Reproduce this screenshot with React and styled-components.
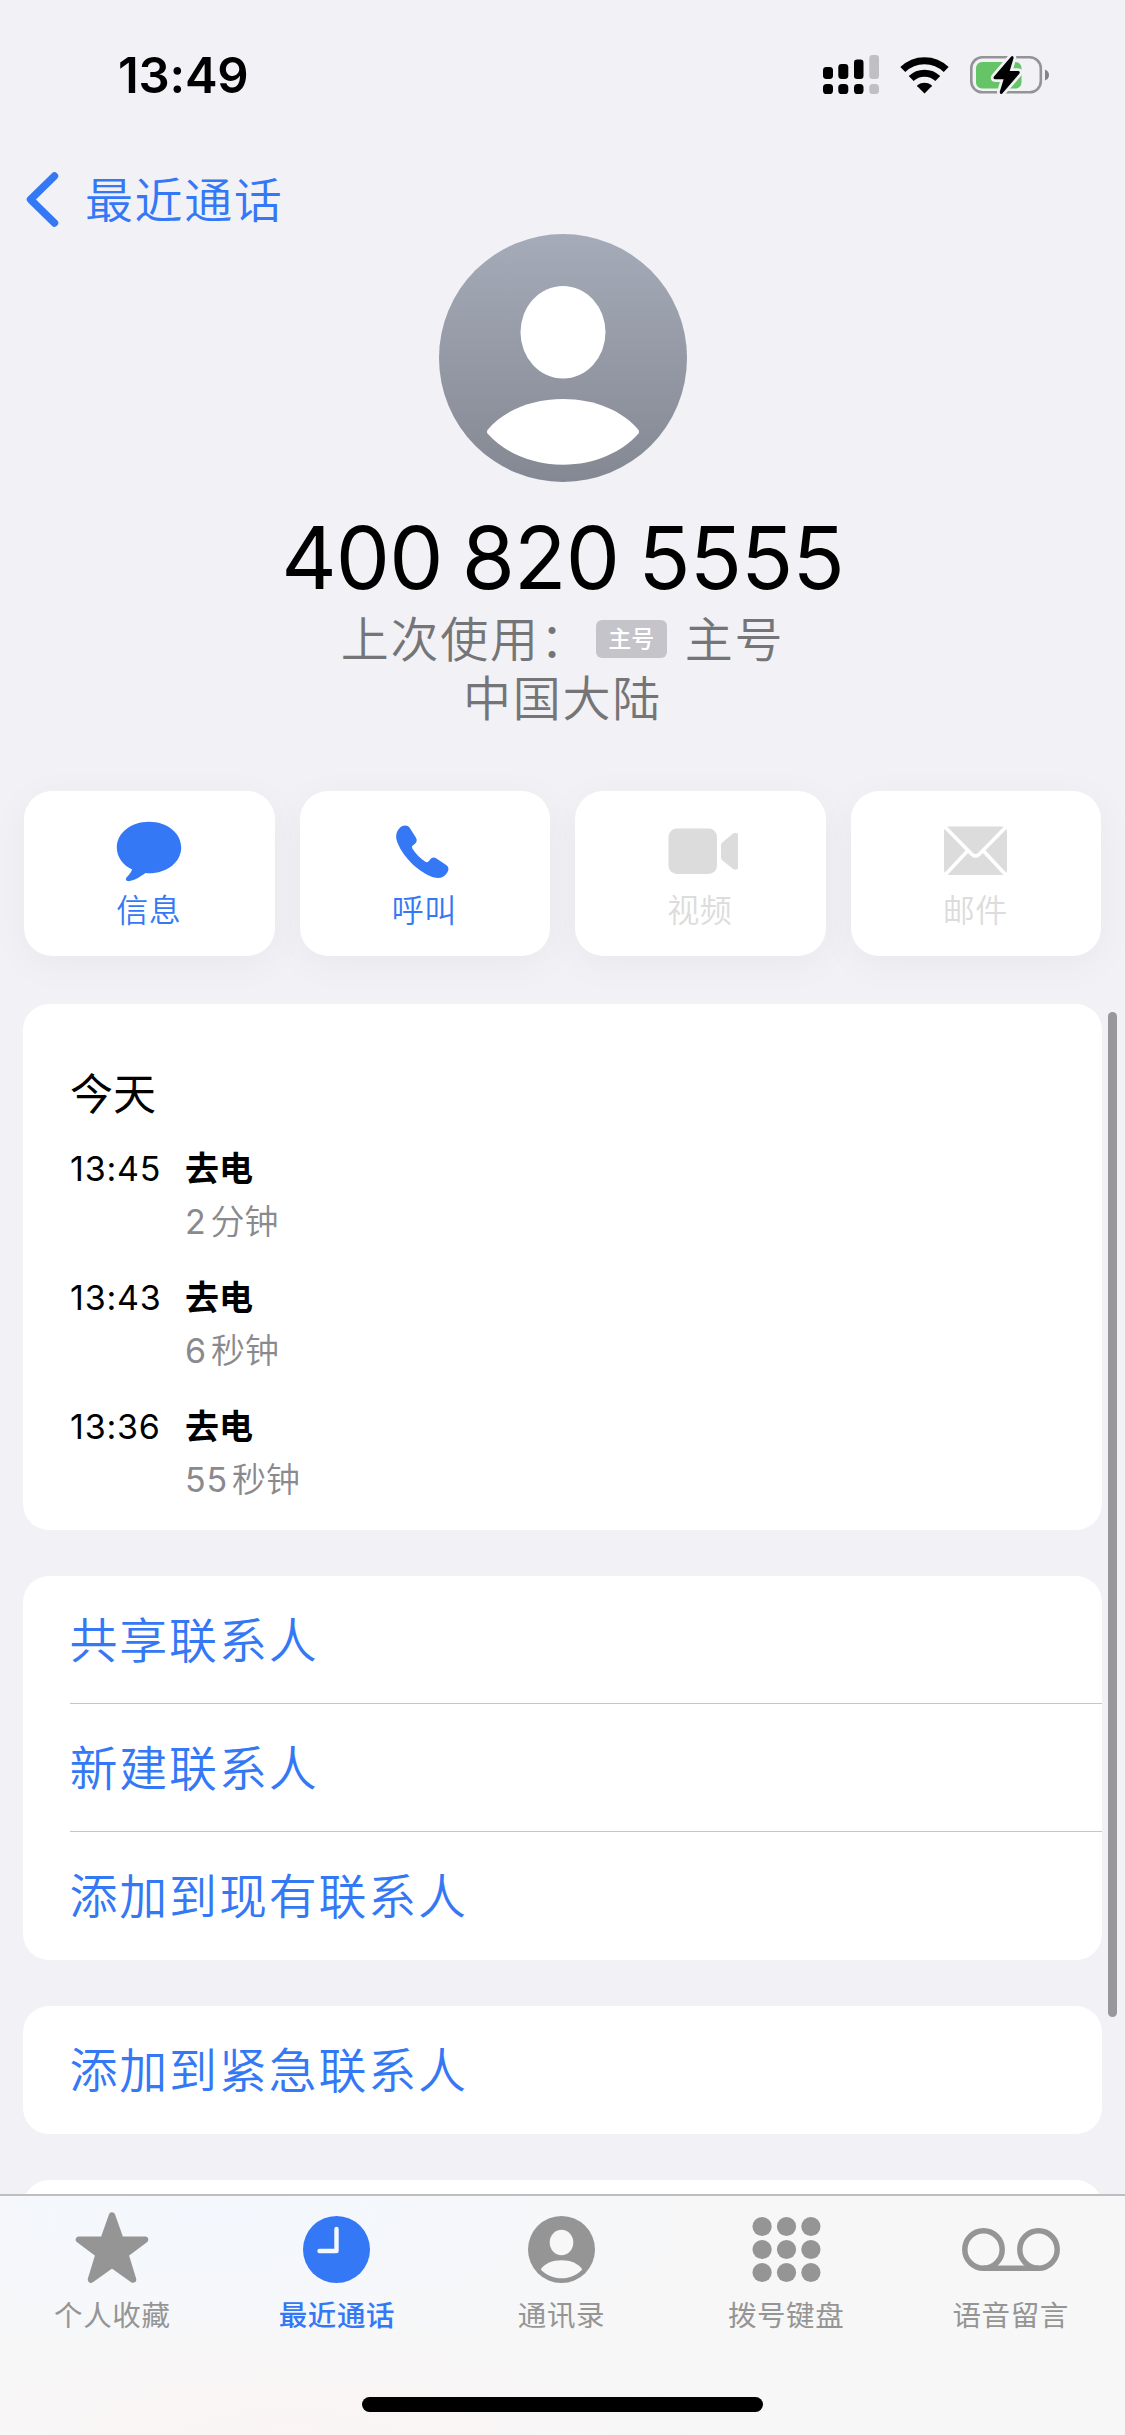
import React from "react";
import styled, { createGlobalStyle } from "styled-components";

const BLUE = "#3478f6";
const GRAY = "#959595";

const GlobalStyle = createGlobalStyle`
  * { box-sizing: border-box; }
  body {
    margin: 0;
    background: #f1f1f6;
    font-family: "Inter", "Noto Sans CJK SC", sans-serif;
    color: #000;
  }
`;

const Screen = styled.div`
  position: relative;
  width: 1125px;
  height: 2435px;
  display: flex;
  flex-direction: column;
  overflow: hidden;
  background: #f1f1f6;
  white-space: nowrap;
`;

const StatusBar = styled.header`
  flex: none;
  height: 150px;
  padding: 0 75px 0 118px;
  display: flex;
  align-items: center;
  justify-content: space-between;
`;

const Clock = styled.time`
  padding-top: 1px;
  font-size: 49px;
  font-weight: 600;
  line-height: 60px;
  letter-spacing: -0.2px;
`;

const StatusIcons = styled.div`
  display: flex;
  align-items: center;
  gap: 21px;
  svg { display: block; }
`;

const NavBar = styled.nav`
  flex: none;
  height: 84px;
  padding: 14px 0 0 25px;
  display: flex;
  align-items: center;
  gap: 26px;
  color: ${BLUE};
`;

const NavTitle = styled.span`
  padding-top: 3px;
  font-size: 48px;
  font-weight: 350;
  line-height: 60px;
  letter-spacing: 1.6px;
`;

const Profile = styled.section`
  flex: none;
  height: 557px;
  display: flex;
  flex-direction: column;
  align-items: center;
  svg { display: block; }
`;

const PhoneNumber = styled.h1`
  margin: 26px 0 0;
  font-size: 86px;
  font-weight: 400;
  line-height: 100px;
  letter-spacing: -0.9px;
  word-spacing: -4px;
`;

const Detail = styled.div`
  margin-top: ${(p) => p.$gap}px;
  height: 50px;
  display: flex;
  align-items: center;
  font-size: 48px;
  font-weight: 350;
  line-height: 50px;
  letter-spacing: 1.8px;
  color: #757577;
`;

const SimBadge = styled.span`
  width: 71px;
  height: 38px;
  margin: 0 18px 2px 6px;
  border-radius: 6px;
  background: #c5c4ca;
  color: #fff;
  font-size: 23px;
  font-weight: 500;
  line-height: 38px;
  letter-spacing: 0;
  text-align: center;
`;

const Actions = styled.section`
  flex: none;
  display: grid;
  grid-template-columns: repeat(4, 1fr);
  gap: 25px;
  padding: 0 24px;
`;

const ActionButton = styled.div`
  height: 165px;
  padding: 24px 1px 0 0;
  display: flex;
  flex-direction: column;
  align-items: center;
  border-radius: 28px;
  background: #fff;
  color: ${(p) => (p.$disabled ? "#dcdcdc" : BLUE)};
  box-shadow: 0 8px 40px rgba(0, 0, 30, 0.045);
  svg { display: block; }
`;

const ActionLabel = styled.span`
  margin-top: 4px;
  font-size: 32px;
  font-weight: 350;
  line-height: 40px;
  letter-spacing: 0.4px;
`;

const Cards = styled.main`
  flex: 1;
  min-height: 0;
  overflow: hidden;
  padding: 48px 23px 0;
  display: flex;
  flex-direction: column;
  gap: 46px;
`;

const Card = styled.section`
  flex: none;
  border-radius: 26px;
  background: #fff;
  overflow: hidden;
`;

const CallLog = styled(Card)`
  height: 526px;
  padding: 64px 47px 0;
`;

const DayTitle = styled.h2`
  margin: 0 0 23px;
  font-size: 43px;
  font-weight: 400;
  line-height: 52px;
`;

const CallRow = styled.div`
  height: 129px;
  display: grid;
  grid-template-columns: 115px 1fr;
  grid-template-rows: 53px 53px;
  line-height: 52px;
  font-size: 34px;
`;

const CallTime = styled.span`
  letter-spacing: 0.8px;
`;

const CallKind = styled.strong`
  font-weight: 700;
`;

const CallLength = styled.span`
  grid-column: 2;
  color: #8a8a8e;
  display: flex;
  gap: 4px;
`;

const CallAmount = styled.span`
  letter-spacing: 0.8px;
`;

const CallUnit = styled.span`
  font-weight: 350;
`;

const LinkRow = styled.div`
  height: 128px;
  margin-left: 46.5px;
  padding-top: 2px;
  border-bottom: ${(p) => (p.$last ? "none" : "1px solid #c6c6c8")};
  font-size: 48px;
  font-weight: 350;
  line-height: 126px;
  letter-spacing: 1.8px;
  color: ${BLUE};
`;

const ScrollThumb = styled.div`
  position: absolute;
  right: 8px;
  top: 1012px;
  width: 9px;
  height: 1005px;
  border-radius: 5px;
  background: #98989b;
`;

const TabBar = styled.footer`
  flex: none;
  height: 241px;
  display: flex;
  flex-direction: column;
  align-items: center;
  justify-content: space-between;
  padding-bottom: 23px;
  border-top: 2px solid #bebec0;
  background:
    radial-gradient(ellipse 480px 140px at 210px 20px, rgba(243, 248, 254, 0.9), rgba(243, 248, 254, 0)),
    radial-gradient(ellipse 420px 130px at 290px 250px, rgba(251, 244, 243, 0.9), rgba(251, 244, 243, 0)),
    #f7f7f8;
`;

const Tabs = styled.div`
  width: 100%;
  padding-right: 2px;
  display: grid;
  grid-template-columns: repeat(5, 1fr);
`;

const Tab = styled.div`
  padding-top: 13px;
  display: flex;
  flex-direction: column;
  align-items: center;
  color: ${(p) => (p.$active ? BLUE : GRAY)};
  svg { display: block; }
`;

const TabLabel = styled.span`
  margin-top: 11px;
  font-size: 28.5px;
  font-weight: ${(p) => (p.$active ? 500 : 400)};
  line-height: 40px;
  letter-spacing: 0.6px;
`;

const HomeIndicator = styled.div`
  width: 401px;
  height: 15px;
  border-radius: 8px;
  background: #000;
`;

const SignalIcon = () => (
  <svg width="56" height="40" viewBox="0 0 56 40">
    <g fill="#000">
      <rect x="0" y="12" width="10" height="12" rx="3.4" />
      <rect x="15.3" y="9" width="10" height="15" rx="3.4" />
      <rect x="31" y="4.5" width="9.5" height="19.5" rx="3.2" />
      <rect x="0" y="29" width="10" height="10" rx="3.6" />
      <rect x="15.3" y="29" width="10" height="10" rx="3.6" />
      <rect x="31" y="29" width="9.5" height="10" rx="3.6" />
    </g>
    <g fill="#c0c0c4">
      <rect x="46.3" y="0" width="9.7" height="24" rx="3.2" />
      <rect x="46.3" y="29" width="9.7" height="10" rx="3.6" />
    </g>
  </svg>
);

const WifiIcon = () => (
  <svg width="49" height="37" viewBox="0 0 49 37">
    <g fill="none" stroke="#000" strokeWidth="7">
      <path d="M2.8 12.6A31 31 0 0 1 46.2 12.6" />
      <path d="M11.2 21.6A19 19 0 0 1 37.8 21.6" />
    </g>
    <path d="M24.5 36.5L17.3 29.2Q17 28.6 17.6 28.1A11 11 0 0 1 31.4 28.1Q32 28.6 31.7 29.2Z" fill="#000" />
  </svg>
);

const BatteryIcon = () => (
  <svg width="80" height="40" viewBox="0 0 80 40">
    <rect x="1.3" y="2.3" width="69.5" height="35" rx="11" fill="none" stroke="#949498" strokeWidth="2.6" />
    <rect x="6" y="7" width="45.5" height="26.5" rx="6" fill="#65c466" />
    <path d="M75 14.5Q79 16 79 20T75 25.5Z" fill="#848488" />
    <path
      d="M41.2 1.4L24 21.5Q22.5 24.3 25.5 24.3H33.6L29.7 37Q30 40 32.3 38.4L49.3 18.8Q50.8 16 47.8 16H39.7L43.6 3Q43.4 0 41.2 1.4Z"
      fill="#000"
      stroke="#f1f1f6"
      strokeWidth="5.5"
      strokeLinejoin="round"
      paintOrder="stroke"
    />
  </svg>
);

const BackIcon = () => (
  <svg width="34" height="56" viewBox="0 0 34 56">
    <path d="M29.5 5L5.5 28.5L29.5 52" fill="none" stroke="currentColor" strokeWidth="7.4" strokeLinecap="round" strokeLinejoin="round" />
  </svg>
);

const Avatar = () => (
  <svg width="248" height="248" viewBox="0 0 248 248">
    <defs>
      <linearGradient id="avatar" x1="0" y1="0" x2="0" y2="1">
        <stop offset="0" stopColor="#a6abb9" />
        <stop offset="1" stopColor="#848892" />
      </linearGradient>
    </defs>
    <circle cx="124" cy="124" r="124" fill="url(#avatar)" />
    <ellipse cx="124" cy="98.3" rx="42.5" ry="46.3" fill="#fff" />
    <path d="M48.5 196C64 177 92 165 124 165S184 177 199.5 196Q200.5 198 199.5 199.5C183 218 156 230.7 124 230.7S65 218 48.5 199.5Q47.5 198 48.5 196Z" fill="#fff" />
  </svg>
);

const MessageIcon = () => (
  <svg width="66" height="72" viewBox="0 0 66 72">
    <path d="M33 6.7C51 6.7 65.2 17.8 65.2 32.5S51 58.3 33 58.3Q31 58.3 29.5 58.1C24 62 18 65.9 12.5 66.2Q8.7 66 10.3 62.8C13 60 14.5 58 16.2 54.5C7 50.5 0.8 42 0.8 32.5C0.8 17.8 15 6.7 33 6.7Z" fill="currentColor" />
  </svg>
);

const PhoneIcon = () => (
  <svg width="58" height="72" viewBox="0 0 58 72">
    <path d="M4.5 13.2C7 10 12.5 9.5 14.8 13L21 22.8C22.3 25 21.8 27.3 20 28.7L17.8 30.5C16.7 31.5 16.8 32.5 17.5 33.7C20.5 38.5 25 43.2 30 46.6C31.3 47.4 32.5 47.3 33.5 46.4L36 43.6C37.6 42.2 39.7 42.2 41.5 43.4L51.5 50.3C54 52.2 54 55 52.3 57.5C48.5 63.5 42.5 64.2 35.5 61.3C21 55 6 39.5 1.8 25.5C0.5 21 1.2 16.5 4.5 13.2Z" fill="currentColor" />
  </svg>
);

const VideoIcon = () => (
  <svg width="70" height="72" viewBox="-3.5 0 70 72" overflow="visible">
    <rect x="0" y="13.5" width="48.5" height="45.5" rx="8.5" fill="currentColor" />
    <path d="M53.8 27.5Q52.5 28.8 52.5 30V42.5Q52.5 44 53.8 45.2L64.5 54Q69.5 56.5 69.5 51.5V21Q69.5 16 64.5 18.5Z" fill="currentColor" />
  </svg>
);

const MailIcon = () => (
  <svg width="63" height="72" viewBox="0 0 63 72">
    <rect x="0" y="11.5" width="63" height="48.5" rx="5" fill="currentColor" />
    <g fill="none" stroke="#fff" strokeWidth="3.6">
      <path d="M1 12L27.5 39Q31.5 43 35.5 39L62 12" />
      <path d="M1 60L23 36.5M62 60L40 36.5" />
    </g>
  </svg>
);

const StarIcon = () => (
  <svg width="74" height="76" viewBox="0 0 74 76">
    <path
      d="M37 6.5L45.5 30.7H70L50.3 45.3L58 70.5L37 55.5L16 70.5L23.7 45.3L4 30.7H28.5Z"
      fill="currentColor"
      stroke="currentColor"
      strokeWidth="6.5"
      strokeLinejoin="round"
    />
  </svg>
);

const RecentsIcon = () => (
  <svg width="67" height="76" viewBox="0 0 67 76">
    <circle cx="33.5" cy="40.5" r="33.5" fill="currentColor" />
    <path d="M33.5 20V42H16.5" fill="none" stroke="#f5f9fd" strokeWidth="4.4" strokeLinecap="round" strokeLinejoin="round" />
  </svg>
);

const ContactsIcon = () => (
  <svg width="67" height="76" viewBox="0 0 67 76">
    <circle cx="33.5" cy="40.5" r="33.5" fill="currentColor" />
    <ellipse cx="33.5" cy="33.5" rx="11.8" ry="12.8" fill="#f7f7f8" />
    <path d="M12.8 60.5C16.5 54.5 24.5 51.3 33.5 51.3S50.5 54.5 54.2 60.5C49 66.2 41.5 69.3 33.5 69.3S18 66.2 12.8 60.5Z" fill="#f7f7f8" />
  </svg>
);

const KEYPAD = [0, 1, 2];

const KeypadIcon = () => (
  <svg width="69" height="76" viewBox="0 0 69 76">
    {KEYPAD.map((row) =>
      KEYPAD.map((col) => (
        <circle key={`${row}${col}`} cx={10.1 + col * 24.4} cy={17.5 + row * 23} r="9.6" fill="currentColor" />
      ))
    )}
  </svg>
);

const VoicemailIcon = () => (
  <svg width="98" height="76" viewBox="0 0 98 76">
    <g fill="none" stroke="currentColor" strokeWidth="5.5">
      <circle cx="21.5" cy="40.5" r="18.7" />
      <circle cx="76.5" cy="40.5" r="18.7" />
      <path d="M21.5 59.2H76.5" />
    </g>
  </svg>
);

const ACTIONS = [
  { label: "信息", Icon: MessageIcon },
  { label: "呼叫", Icon: PhoneIcon },
  { label: "视频", Icon: VideoIcon, disabled: true },
  { label: "邮件", Icon: MailIcon, disabled: true },
];

const CALLS = [
  { time: "13:45", amount: "2", unit: "分钟" },
  { time: "13:43", amount: "6", unit: "秒钟" },
  { time: "13:36", amount: "55", unit: "秒钟" },
];

const LINKS = ["共享联系人", "新建联系人", "添加到现有联系人"];

const TABS = [
  { label: "个人收藏", Icon: StarIcon },
  { label: "最近通话", Icon: RecentsIcon, active: true },
  { label: "通讯录", Icon: ContactsIcon },
  { label: "拨号键盘", Icon: KeypadIcon },
  { label: "语音留言", Icon: VoicemailIcon },
];

export default function App() {
  return (
    <>
      <GlobalStyle />
      <Screen lang="zh-CN">
        <StatusBar>
          <Clock>13:49</Clock>
          <StatusIcons>
            <SignalIcon />
            <WifiIcon />
            <BatteryIcon />
          </StatusIcons>
        </StatusBar>
        <NavBar>
          <BackIcon />
          <NavTitle>最近通话</NavTitle>
        </NavBar>
        <Profile>
          <Avatar />
          <PhoneNumber>400 820 5555</PhoneNumber>
          <Detail $gap={7}>
            上次使用：
            <SimBadge>主号</SimBadge>
            主号
          </Detail>
          <Detail $gap={9}>中国大陆</Detail>
        </Profile>
        <Actions>
          {ACTIONS.map(({ label, Icon, disabled }) => (
            <ActionButton key={label} $disabled={disabled}>
              <Icon />
              <ActionLabel>{label}</ActionLabel>
            </ActionButton>
          ))}
        </Actions>
        <Cards>
          <CallLog>
            <DayTitle>今天</DayTitle>
            {CALLS.map(({ time, amount, unit }) => (
              <CallRow key={time}>
                <CallTime>{time}</CallTime>
                <CallKind>去电</CallKind>
                <CallLength>
                  <CallAmount>{amount}</CallAmount>
                  <CallUnit>{unit}</CallUnit>
                </CallLength>
              </CallRow>
            ))}
          </CallLog>
          <Card>
            {LINKS.map((label, i) => (
              <LinkRow key={label} $last={i === LINKS.length - 1}>
                {label}
              </LinkRow>
            ))}
          </Card>
          <Card>
            <LinkRow $last>添加到紧急联系人</LinkRow>
          </Card>
          <Card>
            <LinkRow $last />
          </Card>
        </Cards>
        <TabBar>
          <Tabs>
            {TABS.map(({ label, Icon, active }) => (
              <Tab key={label} $active={active}>
                <Icon />
                <TabLabel $active={active}>{label}</TabLabel>
              </Tab>
            ))}
          </Tabs>
          <HomeIndicator />
        </TabBar>
        <ScrollThumb />
      </Screen>
    </>
  );
}
